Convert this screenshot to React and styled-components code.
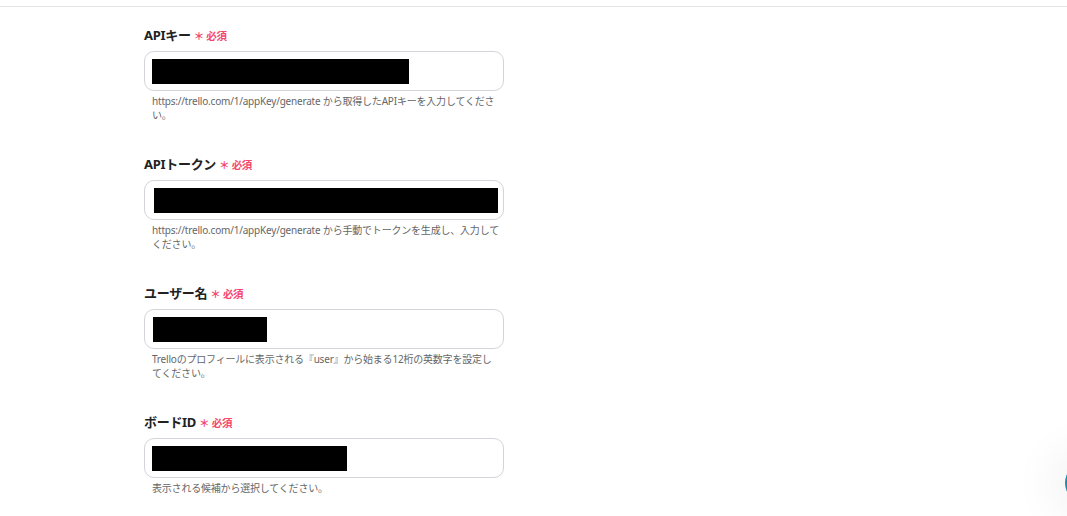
import React from 'react';
import styled, { createGlobalStyle } from 'styled-components';

const GlobalStyle = createGlobalStyle`
  body {
    margin: 0;
    background: #fff;
    font-family: "Noto Sans", "Noto Sans CJK JP", sans-serif;
    color: #222;
    overflow: hidden;
  }
`;

const Page = styled.div`
  min-height: 516px;
  padding-top: 6px;
`;

const TopRule = styled.div`
  height: 1px;
  background: #e4e4e4;
`;

const Form = styled.div`
  width: 360px;
  margin-left: 144px;
  padding-top: 18px;
  display: flex;
  flex-direction: column;
  gap: 32px;
`;

const Field = styled.div`
  display: flex;
  flex-direction: column;
`;

const Label = styled.div`
  display: flex;
  align-items: center;
  height: 18px;
  font-size: 13px;
  font-weight: 700;
  color: #222;
  letter-spacing: -0.3px;
`;

const Required = styled.span`
  margin-left: 3px;
  font-size: 10.5px;
  font-weight: 700;
  color: #f4476d;
  position: relative;
  top: 1px;
`;

const InputBox = styled.div`
  margin-top: 8px;
  height: 40px;
  box-sizing: border-box;
  border: 1px solid #d2d4da;
  border-radius: 10px;
  background: #fff;
  display: flex;
  align-items: center;
  padding-left: ${p => p.$inset}px;
`;

const Masked = styled.div`
  height: 25px;
  background: #000;
`;

const Hint = styled.p`
  margin: 3px 0 0;
  padding: 0 3px 0 8px;
  font-size: 10px;
  line-height: 14px;
  color: #666;
  letter-spacing: -0.2px;
`;

const ChatButton = styled.div`
  position: fixed;
  right: -38px;
  bottom: 13px;
  width: 40px;
  height: 40px;
  border-radius: 50%;
  background: #1d8cad;
  box-shadow: 0 0 40px 20px rgba(0, 0, 0, 0.04);
`;

const fields = [
  {
    label: 'APIキー',
    inset: 7,
    mask: 257,
    hint: 'https://trello.com/1/appKey/generate から取得したAPIキーを入力してください。'
  },
  {
    label: 'APIトークン',
    inset: 9,
    mask: 344,
    hint: 'https://trello.com/1/appKey/generate から手動でトークンを生成し、入力してください。'
  },
  {
    label: 'ユーザー名',
    inset: 8,
    mask: 114,
    hint: 'Trelloのプロフィールに表示される『user』から始まる12桁の英数字を設定してください。'
  },
  {
    label: 'ボードID',
    inset: 7,
    mask: 195,
    hint: '表示される候補から選択してください。'
  }
];

const App = () => (
  <>
    <GlobalStyle />
    <Page>
      <TopRule />
      <Form>
        {fields.map(f => (
          <Field key={f.label}>
            <Label>
              {f.label}
              <Required>＊ 必須</Required>
            </Label>
            <InputBox $inset={f.inset}>
              <Masked style={{ width: f.mask }} />
            </InputBox>
            <Hint>{f.hint}</Hint>
          </Field>
        ))}
      </Form>
    </Page>
    <ChatButton />
  </>
);

export default App;
